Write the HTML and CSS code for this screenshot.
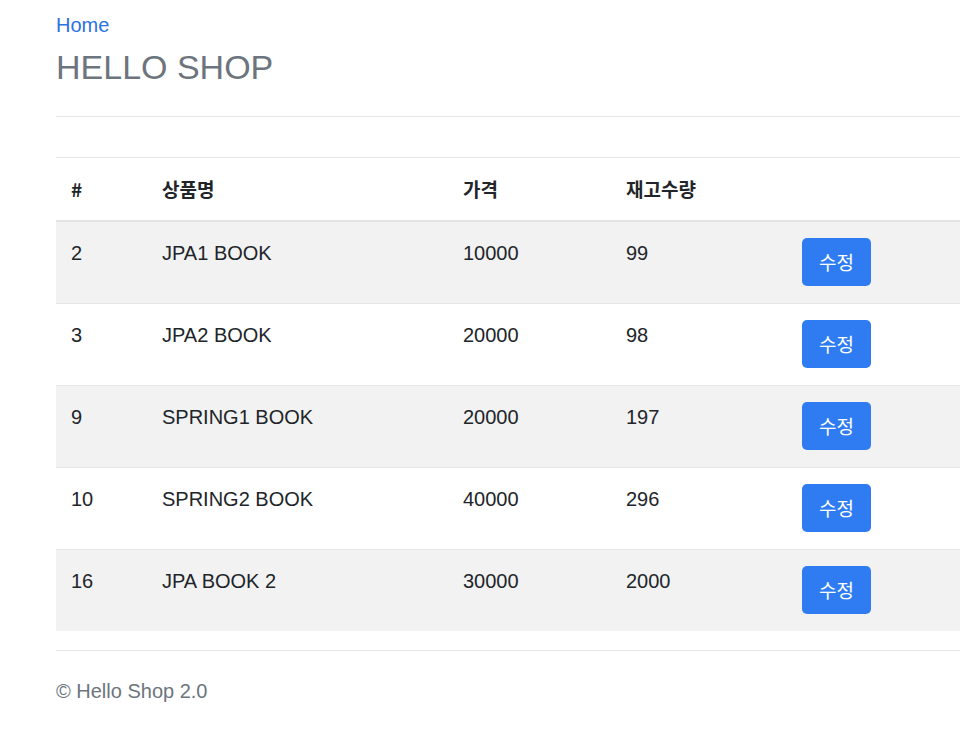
FILE: index.html
```html
<!DOCTYPE html>
<html lang="ko">
<head>
<meta charset="utf-8">
<title>HELLO SHOP</title>
<link rel="stylesheet" href="styles.css">
</head>
<body>
<div class="container">
  <header class="header">
    <a class="home" href="#">Home</a>
    <h3 class="title">HELLO SHOP</h3>
  </header>
  <table class="items">
    <colgroup>
      <col class="c-id"><col class="c-name"><col class="c-price"><col class="c-stock"><col class="c-act">
    </colgroup>
    <thead>
      <tr><th>#</th><th>상품명</th><th>가격</th><th>재고수량</th><th></th></tr>
    </thead>
    <tbody>
      <tr><td>2</td><td>JPA1 BOOK</td><td>10000</td><td>99</td><td><a class="btn" href="#">수정</a></td></tr>
      <tr><td>3</td><td>JPA2 BOOK</td><td>20000</td><td>98</td><td><a class="btn" href="#">수정</a></td></tr>
      <tr><td>9</td><td>SPRING1 BOOK</td><td>20000</td><td>197</td><td><a class="btn" href="#">수정</a></td></tr>
      <tr><td>10</td><td>SPRING2 BOOK</td><td>40000</td><td>296</td><td><a class="btn" href="#">수정</a></td></tr>
      <tr><td>16</td><td>JPA BOOK 2</td><td>30000</td><td>2000</td><td><a class="btn" href="#">수정</a></td></tr>
    </tbody>
  </table>
  <footer class="footer">© Hello Shop 2.0</footer>
</div>
</body>
</html>
```
FILE: styles.css
```css
body {
  margin: 0;
  background: #ffffff;
  font-family: "Liberation Sans", "Noto Sans CJK KR", sans-serif;
  font-size: 20px;
  color: #212529;
}

.container {
  margin-left: 56px;
  width: 904px;
}

.header {
  padding-top: 10px;
  padding-bottom: 28px;
  border-bottom: 1px solid #e6e6e6;
}

.home {
  display: block;
  line-height: 30px;
  color: #2a72e0;
  text-decoration: none;
}

.title {
  margin: 6px 0 0;
  font-size: 34px;
  line-height: 42px;
  font-weight: normal;
  color: #6c757d;
}

.items {
  margin-top: 40px;
  width: 904px;
  border-collapse: collapse;
  table-layout: fixed;
}

.c-id { width: 91px; }
.c-name { width: 301px; }
.c-price { width: 163px; }
.c-stock { width: 176px; }
.c-act { width: 173px; }

.items th {
  text-align: left;
  font-weight: bold;
  line-height: 30px;
  padding: 16px 15px 16px;
  border-top: 1px solid #e6e6e6;
  border-bottom: 2px solid #e3e3e6;
  font-family: "Noto Sans CJK KR", "Liberation Sans", sans-serif;
  font-size: 19px;
}

.items td {
  vertical-align: top;
  line-height: 30px;
  padding: 16px 15px 17px;
  border-top: 1px solid #e6e6e6;
}

.items thead + tbody tr:first-child td {
  border-top: none;
}

.items tbody tr:nth-child(odd) {
  background: #f2f2f2;
}

.btn {
  display: inline-block;
  height: 48px;
  line-height: 48px;
  padding: 0 17px;
  border-radius: 5px;
  background: #2f7cf2;
  color: #ffffff;
  text-decoration: none;
  font-family: "Noto Sans CJK KR", sans-serif;
  font-size: 19px;
}

.footer {
  margin-top: 19px;
  border-top: 1px solid #e6e6e6;
  padding-top: 25px;
  line-height: 30px;
  color: #6c757d;
}
```
